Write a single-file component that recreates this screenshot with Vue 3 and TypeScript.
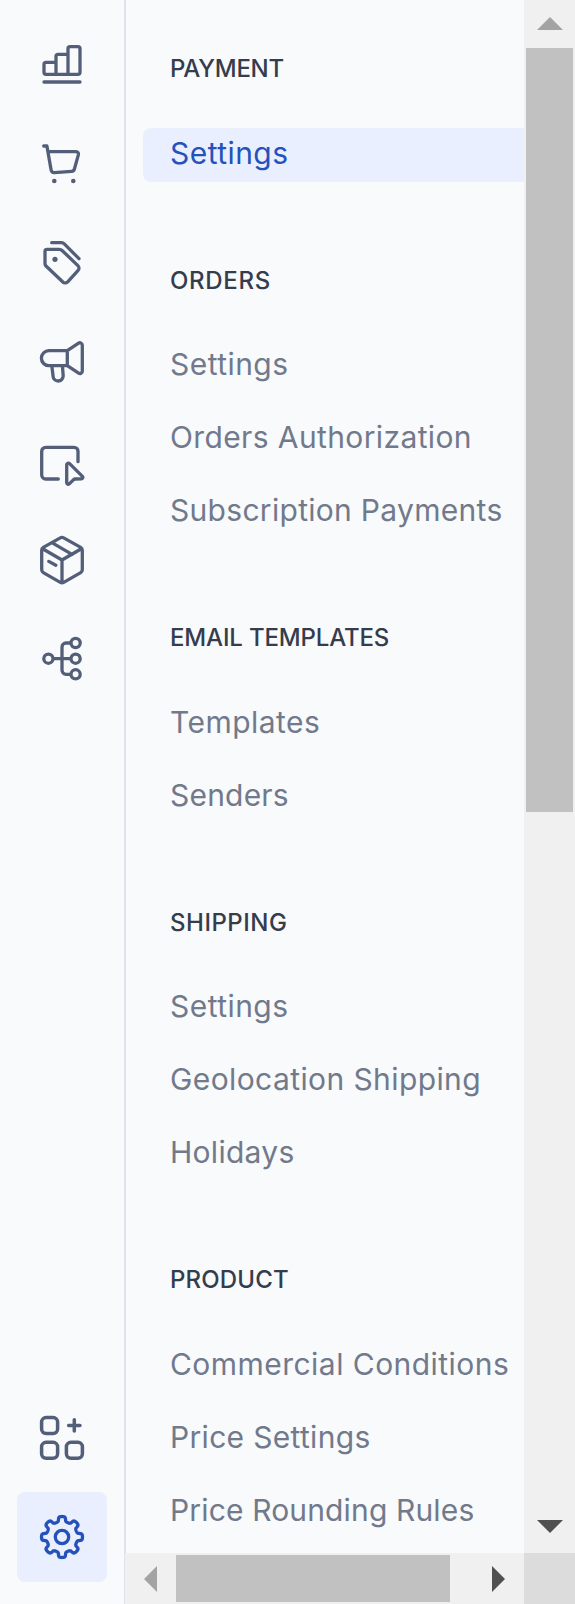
<script setup lang="ts">
interface Label {
  text: string
  tracking: number
}

interface Section {
  title: Label
  items: Label[]
}

const label = (text: string, tracking: number): Label => ({ text, tracking })

const sections: Section[] = [
  { title: label('PAYMENT', -0.25), items: [label('Settings', 0.45)] },
  {
    title: label('ORDERS', 0.7),
    items: [
      label('Settings', 0.45),
      label('Orders Authorization', 0.38),
      label('Subscription Payments', 0.3),
    ],
  },
  { title: label('EMAIL TEMPLATES', -0.16), items: [label('Templates', 0.45), label('Senders', 0.2)] },
  {
    title: label('SHIPPING', 0.5),
    items: [label('Settings', 0.45), label('Geolocation Shipping', 0.4), label('Holidays', 0.28)],
  },
  {
    title: label('PRODUCT', 0.17),
    items: [
      label('Commercial Conditions', 0.46),
      label('Price Settings', 0.32),
      label('Price Rounding Rules', 0.15),
    ],
  },
]

// Stroke paths on a 52 x 52 grid; dots are filled circles
interface Icon {
  name: string
  path: string
  dots?: [number, number, number][]
}

const icons: Icon[] = [
  {
    name: 'Dashboard',
    path: 'M20 36.3H10a2 2 0 0 1-2-2v-7.9a2 2 0 0 1 2-2h10M20 36.3V18.4a2 2 0 0 1 2-2h10M32 36.3V10.7a2 2 0 0 1 2-2h8a2 2 0 0 1 2 2v23.6a2 2 0 0 1-2 2H20M8 44h36',
  },
  {
    name: 'Orders',
    path: 'M7.7 9h3.2L15.1 32.9a3 3 0 0 0 3.2 2.7l17.4-1.3a3 3 0 0 0 2.7-2.3L42.4 17.6a2.4 2.4 0 0 0-2.3-2.9H12',
    dots: [[18.3, 44, 2.3], [37.3, 44, 2.3]],
  },
  {
    name: 'Promotions',
    path: 'M15.7 6.7h9.8a4 4 0 0 1 2.8 1.2L43 22.7M11 13.3h12.3a4 4 0 0 1 2.8 1.2L41.9 29.6a3.6 3.6 0 0 1 0 5.1L31.7 45.8a3.6 3.6 0 0 1-5.1 0L10 30A3.2 3.2 0 0 1 9 27.7V15.3a2 2 0 0 1 2-2z',
    dots: [[19, 23.3, 2.6]],
  },
  {
    name: 'Marketing',
    path: 'M31.3 15.7H12.9a7.5 7.5 0 0 0 0 15h18.4zL42.6 8.2a2.4 2.4 0 0 1 3.7 2v26a2.4 2.4 0 0 1-3.7 2L31.3 30.7M15.8 30.7l1.3 10.6a5 5 0 0 0 5 4.7 5 5 0 0 0 5.1-5.2l-.8-10.1',
  },
  {
    name: 'Storefront',
    path: 'M22.3 45H9.7a4 4 0 0 1-4-4V17.3a4 4 0 0 1 4-4H38a4 4 0 0 1 4 4v10.4M30.7 30.8a1.7 1.7 0 0 1 2.9-1.2L46.4 42.4a1.4 1.4 0 0 1-1 2.4l-6 .2a3 3 0 0 0-2 .8l-3.9 3.9a1.6 1.6 0 0 1-2.8-1.1z',
  },
  {
    name: 'Products',
    path: 'M24.3 4.9a3.4 3.4 0 0 1 3.4 0l17 9.5a3.2 3.2 0 0 1 1.6 2.8v19.6a3.2 3.2 0 0 1-1.6 2.8l-17 9.8a3.4 3.4 0 0 1-3.4 0l-17-9.8a3.2 3.2 0 0 1-1.6-2.8V17.2a3.2 3.2 0 0 1 1.6-2.8zM6.2 15.5L26 27l19.8-11.5M26 27v22.5M16.3 9.8L36 21.3M12.8 28.4l7 3.9',
  },
  {
    name: 'Channels',
    path: 'M7.8 26.7a4.6 4.6 0 1 0 9.2 0 4.6 4.6 0 1 0-9.2 0M35 11a4.6 4.6 0 1 0 9.2 0A4.6 4.6 0 1 0 35 11M35 26.7a4.6 4.6 0 1 0 9.2 0 4.6 4.6 0 1 0-9.2 0M35 42.3a4.6 4.6 0 1 0 9.2 0 4.6 4.6 0 1 0-9.2 0M17 26.7h18M35 11h-5a4 4 0 0 0-4 4v23.3a4 4 0 0 0 4 4h5',
  },
]

// Eight rounded teeth traced around the icon centre; the phase shift squares their shoulders
const gearPath = Array.from({ length: 256 }, (_, i) => {
  const t = (i / 256) * Math.PI * 2
  const a = t + 0.035 * Math.sin(16 * t)
  const r = 18 + 2.5 * Math.tanh(1.3 * Math.cos(8 * t)) / Math.tanh(1.3)
  return `${i ? 'L' : 'M'}${(26 + r * Math.sin(a)).toFixed(2)} ${(26 - r * Math.cos(a)).toFixed(2)}`
}).join('') + 'Z'
</script>

<template>
  <div class="shell">
    <nav class="rail">
      <a v-for="icon in icons" :key="icon.name" class="slot" :aria-label="icon.name">
        <svg class="icon" viewBox="0 0 52 52">
          <path :d="icon.path" />
          <circle v-for="(d, i) in icon.dots" :key="i" class="dot" :cx="d[0]" :cy="d[1]" :r="d[2]" />
        </svg>
      </a>
      <a class="slot bottom" aria-label="Apps">
        <svg class="icon apps" viewBox="0 0 52 52">
          <rect x="5.6" y="5.6" width="16" height="16" rx="4.5" />
          <rect x="5.6" y="30.3" width="16" height="16" rx="4.5" />
          <rect x="30.4" y="30.3" width="16" height="16" rx="4.5" />
          <path d="M38.3 7.7v11.4M32.6 13.4H44" />
        </svg>
      </a>
      <a class="slot active" aria-label="Settings">
        <svg class="icon" viewBox="0 0 52 52">
          <path :d="gearPath" />
          <circle cx="26" cy="26" r="6.7" />
        </svg>
      </a>
    </nav>

    <div class="panel">
      <main class="menu">
        <section v-for="(s, si) in sections" :key="s.title.text" class="section">
          <h2 class="title" :style="{ letterSpacing: `${s.title.tracking}px` }">{{ s.title.text }}</h2>
          <a
            v-for="(item, ii) in s.items"
            :key="item.text"
            class="item"
            :class="{ current: si === 0 && ii === 0 }"
            :style="{ letterSpacing: `${item.tracking}px` }"
          >{{ item.text }}</a>
        </section>
      </main>
      <div class="vbar">
        <svg class="arrow muted up" viewBox="0 0 26 13"><path d="M0 13L13 0l13 13z" /></svg>
        <div class="vthumb"></div>
        <svg class="arrow down" viewBox="0 0 26 13"><path d="M0 0h26L13 13z" /></svg>
      </div>
      <div class="hbar">
        <svg class="arrow muted left" viewBox="0 0 13 26"><path d="M13 0v26L0 13z" /></svg>
        <div class="hthumb"></div>
        <svg class="arrow right" viewBox="0 0 13 26"><path d="M0 0l13 13L0 26z" /></svg>
      </div>
      <div class="corner"></div>
    </div>
  </div>
</template>

<style>
body {
  margin: 0;
  overflow: hidden;
}
</style>

<style scoped>
.shell {
  display: flex;
  width: 575px;
  height: 1604px;
  overflow: hidden;
  background: #f8fafc;
  font-family: Inter, "Liberation Sans", sans-serif;
}
.rail {
  box-sizing: border-box;
  flex: none;
  width: 125px;
  padding: 19px 0 22px 17px;
  display: flex;
  flex-direction: column;
  gap: 9px;
  border-right: 1px solid #dfe2e9;
}
.slot {
  display: flex;
  flex: none;
  align-items: center;
  justify-content: center;
  width: 90px;
  height: 90px;
  border-radius: 8px;
  color: #535f79;
}
.bottom {
  margin-top: auto;
}
.active {
  background: #e9effe;
  color: #2552ba;
}
.icon {
  width: 52px;
  height: 52px;
  fill: none;
  stroke: currentColor;
  stroke-width: 3.3;
  stroke-linecap: round;
  stroke-linejoin: round;
}
.apps {
  stroke-width: 3.5;
}
.dot {
  fill: currentColor;
  stroke: none;
}
.panel {
  flex: none;
  width: 450px;
  display: grid;
  grid-template-columns: 399px 51px;
  grid-template-rows: 1553px 51px;
}
.menu {
  box-sizing: border-box;
  overflow: hidden;
  padding: 54.2px 0 0 17px;
  border-left: 1px solid #dfe2e9;
}
.section {
  padding-bottom: 83.8px;
}
.title {
  margin: 0 0 43.7px 27px;
  height: 30px;
  line-height: 30px;
  font-size: 24px;
  font-weight: 500;
  color: #353c4b;
  white-space: nowrap;
}
.item {
  display: block;
  box-sizing: border-box;
  height: 54px;
  padding-left: 27px;
  line-height: 50px;
  font-size: 30px;
  color: #71798b;
  border-radius: 8px 0 0 8px;
  white-space: nowrap;
}
.item + .item {
  margin-top: 19px;
}
.current {
  background: #e9effe;
  color: #2552ba;
}
.vbar,
.hbar {
  display: flex;
  align-items: center;
  background: #f0f0f0;
}
.vbar {
  flex-direction: column;
}
.vthumb {
  width: 47px;
  height: 764px;
  margin-top: 18px;
  background: #c1c1c1;
}
.hthumb {
  width: 274px;
  height: 47px;
  margin-left: 19px;
  background: #c1c1c1;
}
.arrow {
  flex: none;
  width: 26px;
  height: 13px;
  fill: #505050;
}
.muted {
  fill: #a3a3a3;
}
.up {
  margin-top: 17px;
}
.down {
  margin: auto 0 20px;
}
.left,
.right {
  width: 13px;
  height: 26px;
}
.left {
  margin-left: 19px;
}
.right {
  margin: 0 19px 0 auto;
}
.corner {
  background: #dcdcdc;
}
</style>
